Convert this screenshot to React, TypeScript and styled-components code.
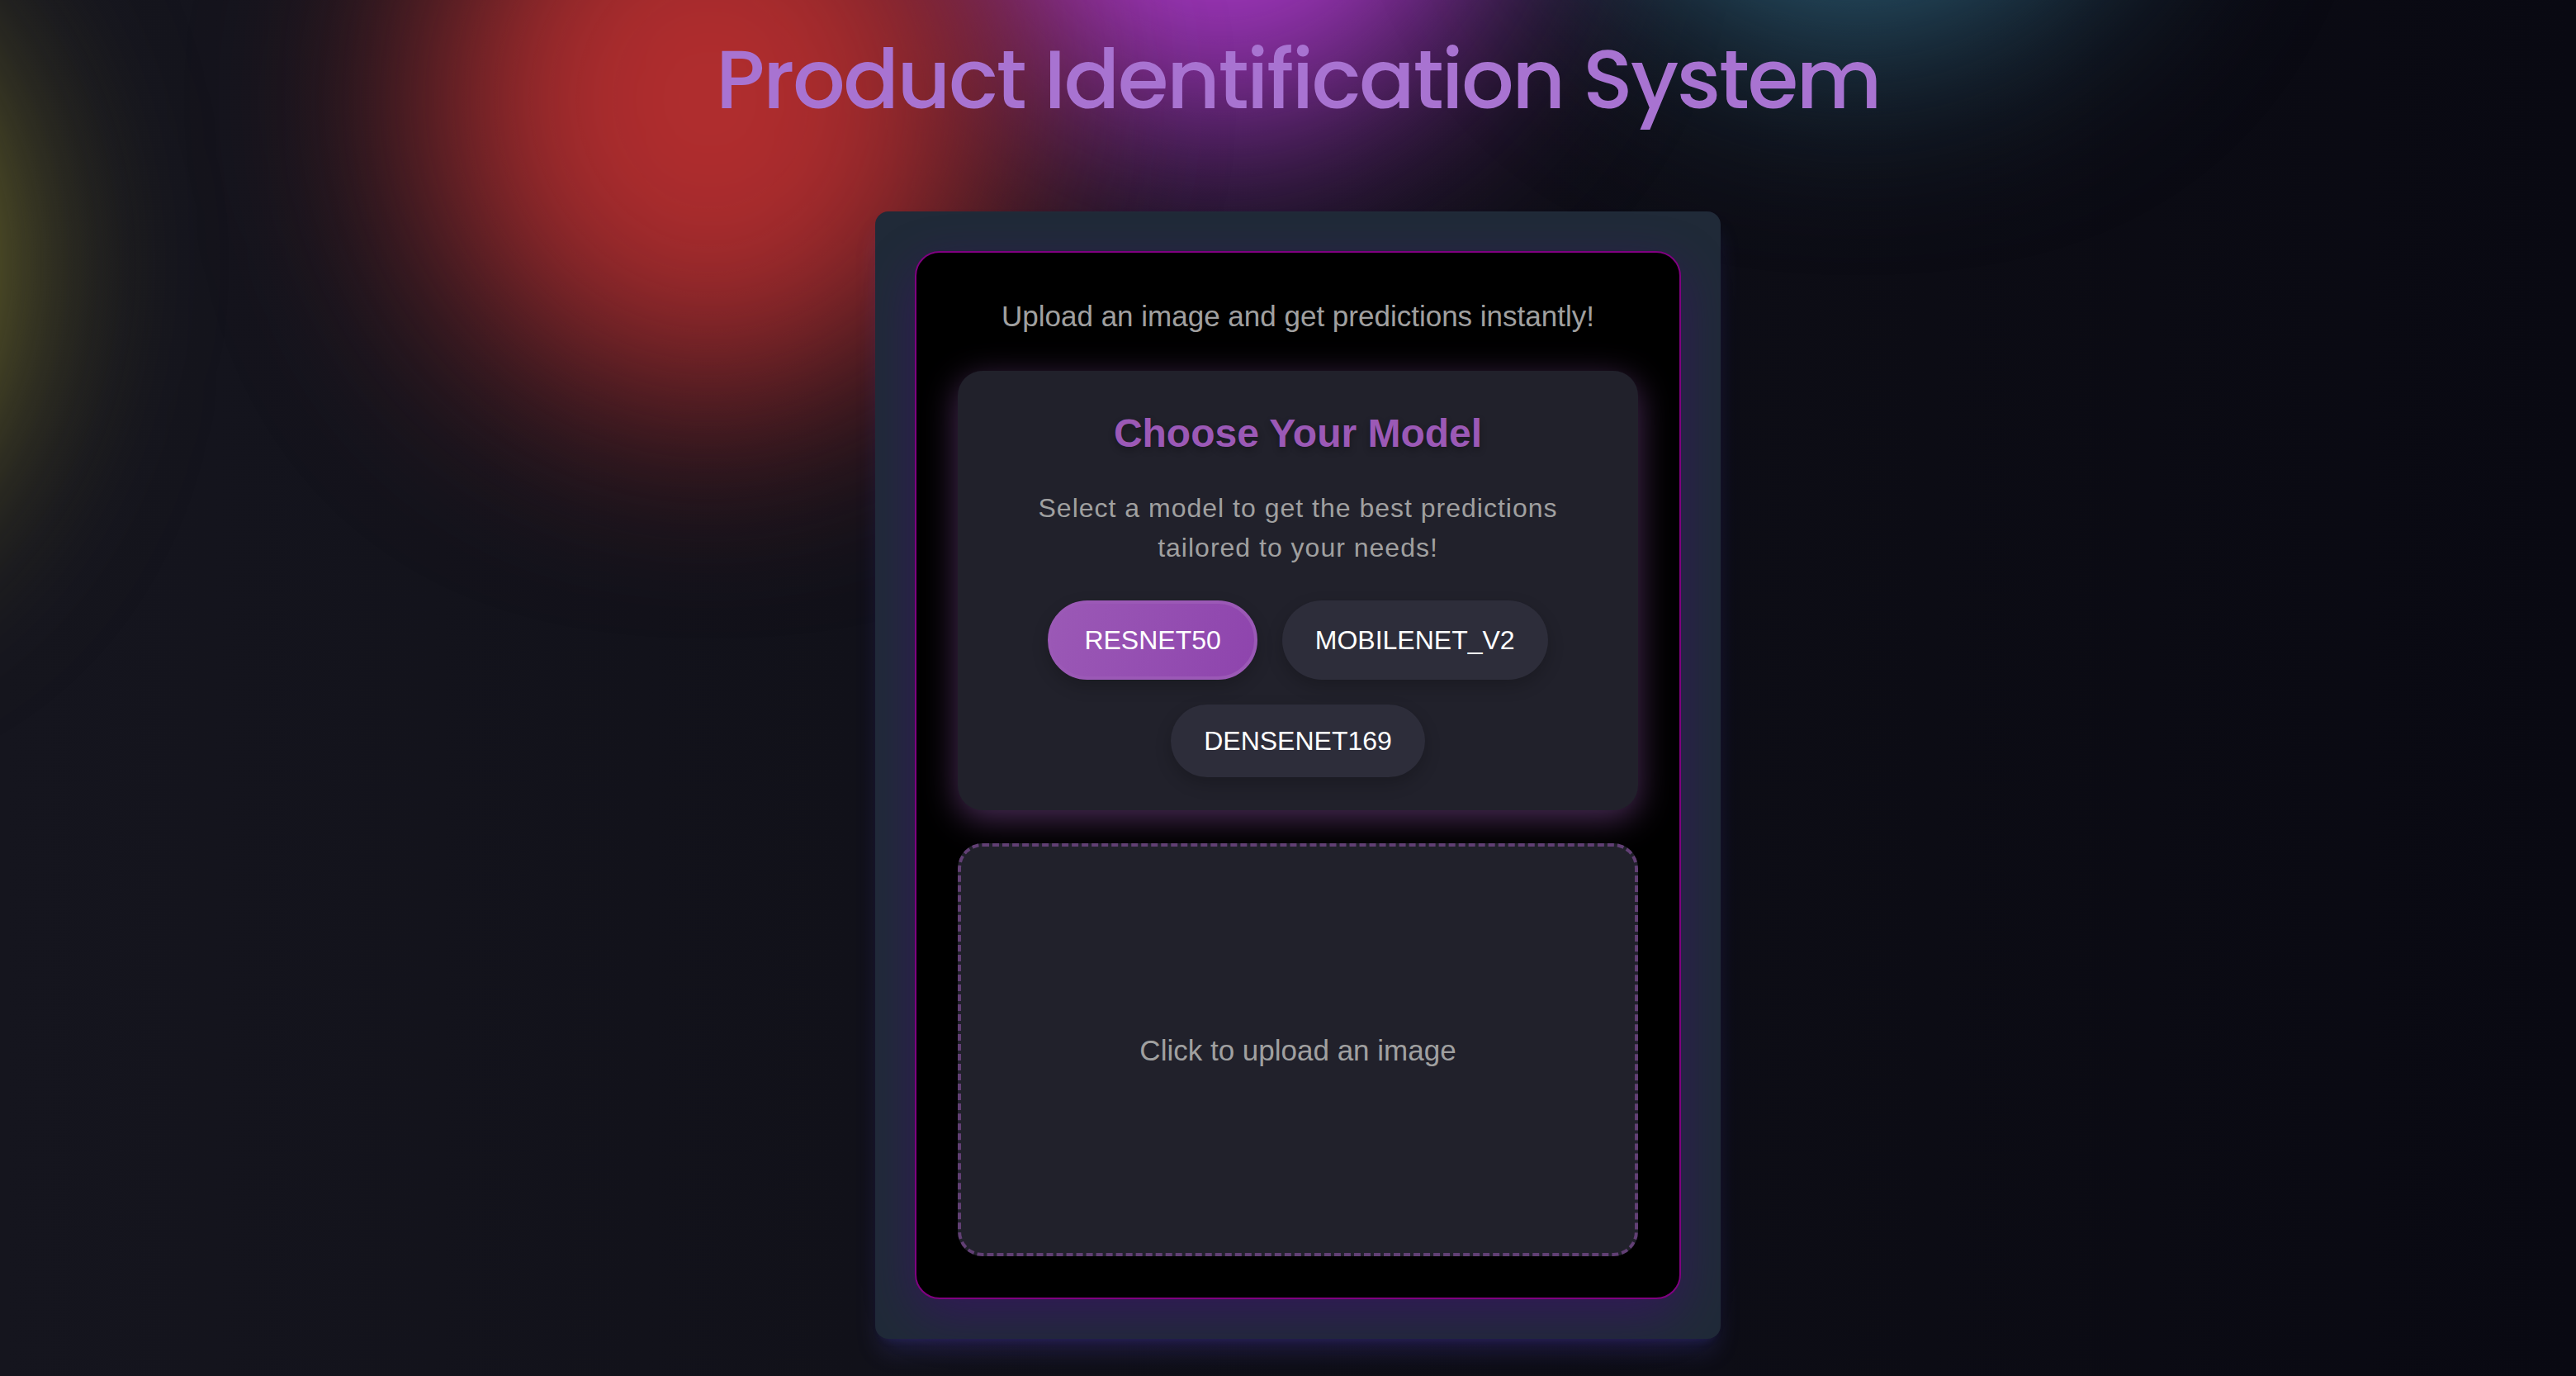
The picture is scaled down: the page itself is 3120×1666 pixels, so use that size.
import React, { useState } from "react";
import styled, { createGlobalStyle } from "styled-components";

const GlobalStyle = createGlobalStyle`
  * { box-sizing: border-box; }
  body {
    margin: 0;
    background: #0b0a13;
    font-family: "Liberation Sans", Arial, Helvetica, sans-serif;
  }
  h1, h2, p { margin: 0; }
`;

const Page = styled.main`
  position: relative;
  overflow: hidden;
  min-height: 100vh;
  display: flex;
  flex-direction: column;
  align-items: center;
  gap: 88px;
  padding: 24px 0 45px 24px;
  background: linear-gradient(90deg, #15151e 0%, #0f0f17 50%, #090912 100%);
`;

const Blob = styled.div<{ $x: number; $y: number; $color: string }>`
  position: absolute;
  left: ${(p) => p.$x}px;
  top: ${(p) => p.$y}px;
  width: 680px;
  height: 720px;
  border-radius: 50%;
  background: ${(p) => p.$color};
  filter: blur(128px);
`;

const Title = styled.h1`
  position: relative;
  font-family: Poppins, Inter, sans-serif;
  font-size: 100px;
  font-weight: 500;
  line-height: 144px;
  letter-spacing: -0.025em;
  color: #a873d1;
`;

const Frame = styled.section`
  position: relative;
  width: 1024px;
  max-width: 100%;
  padding: 48px;
  border-radius: 16px;
  background: #202a38;
  box-shadow:
    0 20px 30px -6px rgba(89, 86, 225, 0.2),
    0 8px 12px -8px rgba(89, 86, 225, 0.2);
`;

const Panel = styled.div`
  display: flex;
  flex-direction: column;
  gap: 40px;
  padding: 50px;
  border: 2px solid #800080;
  border-radius: 30px;
  background: #000;
  text-align: center;
  box-shadow: 0 20px 60px rgba(75, 0, 130, 0.42);
`;

const Lead = styled.p`
  font-size: 35px;
  line-height: 53px;
  color: #a0a0a0;
`;

const ModelCard = styled.section`
  padding: 40px;
  border-radius: 30px;
  background: #21212b;
  box-shadow: 0 10px 40px rgba(155, 89, 182, 0.48);
`;

const CardTitle = styled.h2`
  font-size: 48px;
  font-weight: 700;
  line-height: 72px;
  color: #9b59b6;
  text-shadow: 0 4px 8px rgba(0, 0, 0, 0.3);
`;

const CardText = styled.p`
  margin: 30px 0 40px;
  font-size: 32px;
  line-height: 48px;
  letter-spacing: 1px;
  color: #a0a0a0;
`;

const Choices = styled.div`
  display: flex;
  flex-wrap: wrap;
  justify-content: center;
  gap: 30px;
`;

const Choice = styled.button<{ $active: boolean }>`
  padding: 20px 40px;
  border: ${(p) => (p.$active ? "4px solid #9b59b6" : "none")};
  border-radius: 50px;
  background: ${(p) => (p.$active ? "linear-gradient(110deg, #9b59b6, #8e44ad)" : "#2d2d3a")};
  color: #fff;
  font: 400 32px/48px "Liberation Sans", Arial, sans-serif;
  cursor: pointer;
  box-shadow: 0 8px 20px rgba(0, 0, 0, 0.2);
`;

const HiddenFile = styled.input`
  position: absolute;
  width: 1px;
  height: 1px;
  opacity: 0;
`;

const DropZone = styled.label`
  display: flex;
  align-items: center;
  justify-content: center;
  height: 500px;
  border: 4px dashed #613f74;
  border-radius: 30px;
  background: #21212b;
  font-size: 35px;
  line-height: 53px;
  color: #a0a0a0;
  cursor: pointer;
`;

const models = ["RESNET50", "MOBILENET_V2", "DENSENET169"];

export default function App() {
  const [model, setModel] = useState(models[0]);
  return (
    <>
      <GlobalStyle />
      <Page>
        <Blob $x={-700} $y={-40} $color="#96922f" />
        <Blob $x={1140} $y={-560} $color="#a838c6" />
        <Blob $x={520} $y={-240} $color="#b02d2e" />
        <Blob $x={1910} $y={-680} $color="#2f6680" />
        <Title>Product Identification System</Title>
        <Frame>
          <Panel>
            <Lead>Upload an image and get predictions instantly!</Lead>
            <ModelCard>
              <CardTitle>Choose Your Model</CardTitle>
              <CardText>Select a model to get the best predictions tailored to your needs!</CardText>
              <Choices>
                {models.map((name) => (
                  <Choice
                    key={name}
                    type="button"
                    $active={name === model}
                    aria-pressed={name === model}
                    onClick={() => setModel(name)}
                  >
                    {name}
                  </Choice>
                ))}
              </Choices>
            </ModelCard>
            <DropZone>
              Click to upload an image
              <HiddenFile type="file" accept="image/*" />
            </DropZone>
          </Panel>
        </Frame>
      </Page>
    </>
  );
}
